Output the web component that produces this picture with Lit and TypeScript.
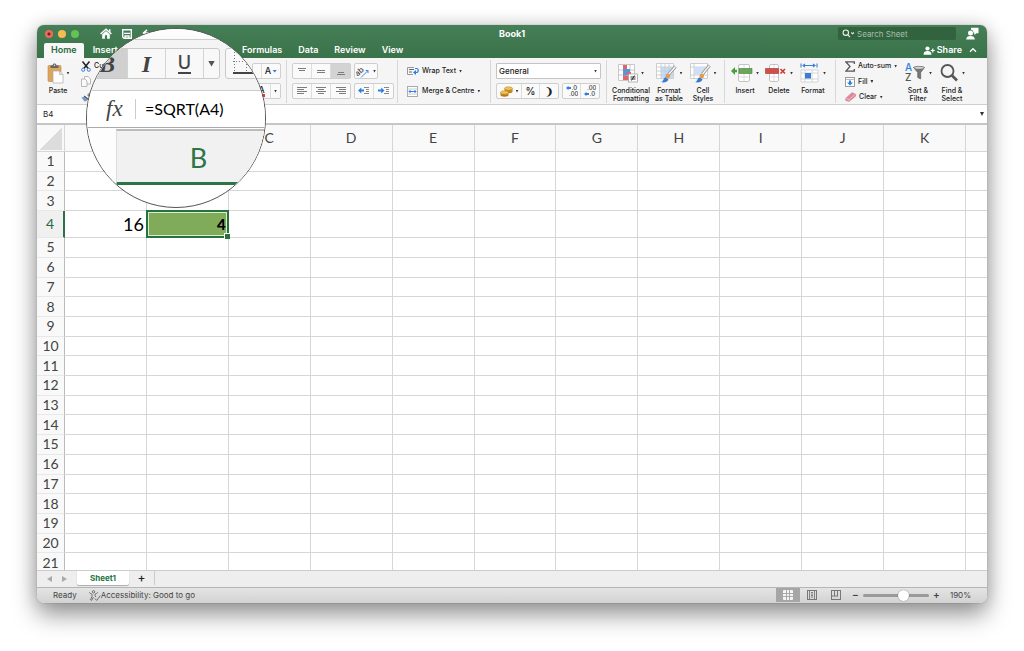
import { LitElement, html, css, svg, nothing, type TemplateResult } from "lit";
import { customElement } from "lit/decorators.js";
import { classMap } from "lit/directives/class-map.js";

const icon = (w: number, h: number, body: unknown) =>
  html`<svg class="icon" width=${w} height=${h} viewBox="0 0 ${w} ${h}" fill="none" aria-hidden="true">${body}</svg>`;

const lines = (rows: number[][]) =>
  icon(12, 10, svg`${rows.map(([x1, x2, y]) => svg`<path d="M${x1} ${y}.5H${x2}" stroke="#7c7c7c"/>`)}`);

const icons = {
  home: icon(12, 11, svg`<path d="M.6 6L6 1.2 11.400 6" stroke="#fff" stroke-width="1.4"/><path d="M9 1.2h1.5v3L9 3z" fill="#fff"/><path d="M2.2 6.200L6 2.900l3.800 3.300v4.500H7.1V7.2H4.9v3.500H2.2z" fill="#fff"/>`),
  save: icon(10, 10, svg`<path d="M.7.7h8.6v8.6H2L.7 8z" stroke="#fff" stroke-width="1.4"/><path d="M2 4.4h6M3 7h4v2.5H3z" stroke="#fff" stroke-width="1.3"/>`),
  undo: icon(12, 10, svg`<path d="M5 .8L1.6 4 5 7.2M2 4h6c2 0 3 1.500 3 4" stroke="#fff" stroke-width="1.6"/>`),
  search: icon(13, 9, svg`<circle cx="3.800" cy="3.700" r="2.700" stroke="#e8f0ea" stroke-width="1.1"/><path d="M5.800 5.800L8 8.200M9.300 3.500l1.300 1.300 1.300-1.300" stroke="#e8f0ea" stroke-width="1.1"/>`),
  feedback: icon(13, 13, svg`<circle cx="4.500" cy="6" r="2.500" fill="#fff"/><path d="M.2 12.500c0-2.500 1.600-3.500 4.300-3.500s4.300 1 4.300 3.500z" fill="#fff"/><path d="M5 .8h7.500v5.400H10.500L8.300 8V5.800H7.500C7.600 4.200 6.500 3 5 2.800z" fill="#fff"/>`),
  share: icon(12, 9, svg`<circle cx="4.500" cy="2.500" r="2.100" fill="#fff"/><path d="M.5 8.700C.5 6 2.300 5 4.500 5S8.500 6 8.500 8.700z" fill="#fff"/><path d="M9.800 2.500v4M7.800 4.500h4" stroke="#fff" stroke-width="1.2"/>`),
  collapse: icon(8, 6, svg`<path d="M1 4.700L4 1.700l3 3" stroke="#fff" stroke-width="1.300"/>`),
  paste: icon(17, 21, svg`<rect x="1" y="2.500" width="13" height="16" rx="1" fill="#dca55c" stroke="#c28a3c" stroke-width=".6"/><path d="M3.500 5V2.500h2C5.700 1 6.500.5 7.500.5s1.800.5 2 2h2V5z" fill="#666"/><circle cx="7.500" cy="2.200" r=".7" fill="#eee"/><path d="M6 8h6.500L16 11.500V20H6z" fill="#fff" stroke="#aaa" stroke-width=".7"/><path d="M12.500 8v3.500H16" fill="#ddd" stroke="#aaa" stroke-width=".6"/>`),
  cut: icon(10, 11, svg`<path d="M1.500.5l5.700 7M8.500.5l-5.700 7" stroke="#222" stroke-width="1.500"/><circle cx="2.200" cy="8.700" r="1.600" stroke="#3c7fd9"/><circle cx="7.800" cy="8.700" r="1.600" stroke="#3c7fd9"/>`),
  copy: icon(10, 11, svg`<path d="M3.500.5h3.700L9.500 3v5h-6z" fill="#fafafa" stroke="#aaa" stroke-width=".8"/><path d="M.5 3h3.500L6 5v5.500H.5z" fill="#fafafa" stroke="#aaa" stroke-width=".8"/>`),
  painter: icon(11, 10, svg`<path d="M6 3l3-2.700 1.700 1.800L8 5z" fill="#888"/><path d="M3.500 3.500L7.800 7 7 8 2.500 5z" fill="#555"/><path d="M.3 5.500L3 5l3.800 3-3 1.800z" fill="#6f9bcb"/>`),
  orient: icon(14, 13, svg`<text x="0" y="10" font-size="8" fill="#444" transform="rotate(-42 3 9)">ab</text><path d="M5 12.500L12 5.500M12 5.500v2.500M12 5.500H9.700" stroke="#3c86dd"/>`),
  outdent: icon(12, 10, svg`<path d="M6 1.500h5M8 3.500h3M8 5.500h3M6 7.500h5" stroke="#888"/><path d="M0 4.500l3.300-3v2H6v2H3.300v2z" fill="#2f7fe0"/>`),
  indent: icon(12, 10, svg`<path d="M6 1.500h5M8 3.500h3M8 5.500h3M6 7.500h5" stroke="#888"/><path d="M6.500 4.500l-3.300-3v2H0v2h3.200v2z" fill="#2f7fe0"/>`),
  wrap: icon(12, 10, svg`<path d="M7 1.500H.5v7H6" stroke="#999"/><path d="M2 3.500h5M2 6h3" stroke="#666"/><path d="M8 2.500h1.500c2.300 0 2.300 4 0 4H8" stroke="#2f7fe0" stroke-width="1.200"/><path d="M9 4v5L6 6.500z" fill="#2f7fe0"/>`),
  merge: icon(12, 11, svg`<rect x=".5" y=".5" width="10" height="10" fill="#fff" stroke="#aaa"/><path d="M.5 3h10M.5 8h10" stroke="#ccc"/><path d="M2 5.500h7M3.500 4L2 5.500 3.500 7M7.500 4L9 5.500 7.500 7" stroke="#2f7fe0"/>`),
  coins: icon(13, 11, svg`<ellipse cx="8.500" cy="5.500" rx="4" ry="1.700" fill="#b67a14"/><path d="M4.500 2.500h8v3h-8z" fill="#c98f25"/><ellipse cx="8.500" cy="2.500" rx="4" ry="1.700" fill="#f0c45c" stroke="#b67a14" stroke-width=".5"/><ellipse cx="4.500" cy="9" rx="4" ry="1.700" fill="#b67a14"/><path d="M.5 6.500h8V9h-8z" fill="#c98f25"/><ellipse cx="4.500" cy="6.500" rx="4" ry="1.700" fill="#f0c45c" stroke="#b67a14" stroke-width=".5"/>`),
  moreDec: icon(12, 12, svg`<path d="M0 3l2.500-2.200V2H5v2H2.500v1.200z" fill="#2f7fe0"/><text x="5.500" y="5" font-size="6" fill="#333">.0</text><text x="3" y="11" font-size="6" fill="#333">.00</text>`),
  lessDec: icon(12, 12, svg`<path d="M0 9l2.500-2.200V8H5v2H2.500v1.200z" fill="#2f7fe0"/><text x="3" y="5" font-size="6" fill="#333">.00</text><text x="5.500" y="11" font-size="6" fill="#333">.0</text>`),
  conditional: icon(20, 19, svg`<path d="M.5.5h16v16H.5zM6 .5v16M12 .5v16M.5 6h16M.5 11h16" fill="#fff" stroke="#bbb" stroke-width=".8"/><path d="M5 1h4v4H5zM5 11.500h7v4.500H5z" fill="#e06666"/><path d="M5 5h7v3H5zM5 8h4v3.500H5z" fill="#5b93dd"/><path d="M9 8h4v3H9z" fill="#e06666"/><rect x="10.500" y="10" width="9" height="8" fill="#fff" stroke="#999" stroke-width=".7"/><path d="M12.500 13h5M12.500 15h5M16.500 11.500l-3 5" stroke="#222" stroke-width=".9"/>`),
  table: icon(21, 20, svg`<path d="M.5.5h17v15H.5zM5 .5v15M9 .5v15M13 .5v15M.5 4h17M.5 8h17M.5 12h17" fill="#fff" stroke="#c4c4c4" stroke-width=".8"/><path d="M5 4h12v11H5z" fill="#b9d3f0" opacity=".8"/><path d="M19.500 3.500l-7 8" stroke="#888" stroke-width="3"/><path d="M19.500 3.500l-7 8" stroke="#f5f5f5" stroke-width="1.600"/><circle cx="11.800" cy="13" r="2.300" fill="#e49a49"/><path d="M5 19c2.500 0 2-3.500 4.500-4.700l3 2.200C11.500 19 8 20 5 19z" fill="#3a7bd0"/>`),
  styles: icon(21, 20, svg`<path d="M.5.5h17v15H.5zM4 .5v15M.5 4h17M.5 12h17" fill="#fff" stroke="#c4c4c4" stroke-width=".8"/><path d="M4 4h11v8H4z" fill="#cfe0f5"/><path d="M19.500 2.500l-7 8.500" stroke="#888" stroke-width="3"/><path d="M19.500 2.500l-7 8.500" stroke="#f5f5f5" stroke-width="1.600"/><circle cx="11.800" cy="13" r="2.300" fill="#e49a49"/><path d="M5 19c2.500 0 2-3.500 4.500-4.700l3 2.200C11.500 19 8 20 5 19z" fill="#3a7bd0"/>`),
  insert: icon(22, 18, svg`<rect x="7.500" y=".5" width="11" height="17" rx="1.500" fill="#fff" stroke="#c4c4c4"/><path d="M13 1v16M8 5h10M8 13h10" stroke="#ddd"/><path d="M8 4.500h13v5H8z" fill="#6aa65e" stroke="#3e8436" stroke-width=".6"/><path d="M0 7l4-4v2.700h2v2.600H4V11z" fill="#4f9a43"/>`),
  remove: icon(22, 18, svg`<rect x="4.500" y=".5" width="9" height="17" rx="1.500" fill="#fff" stroke="#c4c4c4"/><path d="M9 1v16M5 5h8M5 13h8" stroke="#ddd"/><path d="M.5 4.500h13v5H.5z" fill="#cf4f49" stroke="#a8302c" stroke-width=".6"/><path d="M15.500 5l4.500 4.500M20 5l-4.500 4.500" stroke="#c93a34" stroke-width="1.600"/>`),
  format: icon(20, 20, svg`<path d="M1 .5v4M17 .5v4M3 2.500h12M5 .8L3 2.500l2 1.700M13 .8l2 1.700-2 1.700" stroke="#3a7fd5" stroke-width="1.100"/><path d="M1 7h17v12H1zM5 7v12M12 7v12M1 10h17M1 16h17" fill="#fff" stroke="#ccc" stroke-width=".8"/><path d="M5 10h6v5.500H5z" fill="#3a7fd5"/>`),
  sigma: icon(10, 11, svg`<path d="M9.300 3V.8H.8L5 5.400.8 10.200h8.500V8" stroke="#555" stroke-width="1.300"/>`),
  fill: icon(10, 10, svg`<rect x=".5" y=".5" width="9" height="9" fill="#fff" stroke="#999"/><path d="M.5 2.500h9" stroke="#bbb"/><path d="M4 3.500h2v2h2L5 8.500l-3-3h2z" fill="#2f7fe0"/>`),
  eraser: icon(11, 10, svg`<path d="M.7 6.500L7 .7l3.500 1.500v2L4 9.500.7 8.300z" fill="#e08a9b" stroke="#b85c70" stroke-width=".5"/><path d="M.7 6.500L4 7.700l6.500-5.500M4 7.700v1.800" stroke="#f6d0d8" stroke-width=".7"/>`),
  sort: icon(22, 20, svg`<text x="1" y="8" font-size="10" fill="#2f7fe0">A</text><text x="1" y="18" font-size="10" fill="#555">Z</text><path d="M9.500 4.500c0-1.500 11-1.500 11 0L16.700 9.500v6.500l-3-1.500v-5z" fill="#777" stroke="#555" stroke-width=".6"/><ellipse cx="15" cy="4.700" rx="4.600" ry="1" fill="#d5d5d5"/>`),
  find: icon(20, 20, svg`<circle cx="8.500" cy="8" r="6" stroke="#555" stroke-width="1.800"/><path d="M13 12.500l5 5" stroke="#555" stroke-width="2.600"/>`),
  access: icon(12, 11, svg`<circle cx="4.500" cy="1.800" r="1.200" stroke="#555" stroke-width=".8"/><path d="M.6 2.200c-.3.700 0 1 2.400 2v2.300L1.500 9.800c.5.800 1.100.6 1.400.2L4.400 7.200M8.400 2.200c.3.700 0 1-2.400 2v1.600l1 1.200M5.800 8.500l1.900 1.900 3.700-4.900" stroke="#555" stroke-width=".8"/>`),
  normal: icon(10, 10, svg`<rect width="10" height="10" rx="1" fill="#f4f4f4"/><path d="M3.500 0v10M6.500 0v10M0 3.500h10M0 6.500h10" stroke="#999" stroke-width=".8"/>`),
  page: icon(10, 10, svg`<rect x=".5" y=".5" width="9" height="9" stroke="#777"/><path d="M2.500 1v8M7.500 1v8M4 2.500h2M4 4h2M4 5.500h2M4 7h2" stroke="#777" stroke-width=".9"/>`),
  breaks: icon(10, 10, svg`<rect x=".5" y=".5" width="9" height="9" stroke="#777"/><path d="M3.500 1v5M6.500 1v5M1 6h6" stroke="#777"/>`),
  border: icon(30, 26, svg`<path d="M1.500 0v22M13.500 0v22M0 12.500h28" stroke="#777" stroke-dasharray="1 2"/><path d="M0 24h30" stroke="#444" stroke-width="2"/>`),
};

const caret = html`<span class="caret"></span>`;

const big = (label: TemplateResult, pic: unknown, cls = "") =>
  html`<button class="big ${cls}"><span class="pic">${pic}${caret}</span><span>${label}</span></button>`;

@customElement("app-root")
export class AppRoot extends LitElement {
  static styles = css`
    :host { display: flex; box-sizing: border-box; height: 100vh; padding: 25px 37px 48px; background: #fff; color: #222; font: 500 7px/8px Inter, "Open Sans", sans-serif; }
    * { box-sizing: border-box; }
    button, input, select { font: inherit; color: inherit; background: none; border: 0; padding: 0; margin: 0; outline: 0; min-width: 0; }
    button { display: flex; align-items: center; justify-content: center; white-space: nowrap; }
    a { color: inherit; text-decoration: none; }
    .icon { display: block; flex: none; }
    .window { position: relative; flex: 1; min-width: 0; display: flex; flex-direction: column; border-radius: 7px; background: #fff; box-shadow: 0 0 1px rgba(0,0,0,.5), 0 12px 24px rgba(0,0,0,.4), 0 0 18px rgba(0,0,0,.14); }
    .caret { flex: none; width: 3px; height: 3px; background: #333; clip-path: polygon(0 0, 100% 0, 50% 100%); }

    .top { height: 33px; flex: none; color: #fff; background: linear-gradient(#467f57, #3a7249); border-radius: 7px 7px 0 0; }
    .title { height: 17px; display: grid; grid-template-columns: 1fr auto 1fr; align-items: center; }
    .title h1 { margin: 0; font-size: 9px; line-height: 10px; font-weight: 700; }
    .left { display: flex; align-items: center; }
    .lights { display: flex; gap: 5px; padding: 0 21px 0 8px; }
    .lights i { width: 8px; height: 8px; border-radius: 50%; background: radial-gradient(circle, #7c1f17 1px, #ee6a5f 2px); }
    .lights i:nth-child(2) { background: #f5bd4f; }
    .lights i:nth-child(3) { background: #61c454; }
    .quick { display: flex; gap: 10px; }
    .right { display: flex; justify-content: flex-end; align-items: center; gap: 10px; padding-right: 8px; }
    .search { display: flex; align-items: center; gap: 2px; width: 118px; height: 13px; padding-left: 4px; border-radius: 2px; background: #32633f; font-size: 8px; font-weight: 400; }
    .search input { flex: 1; }
    .search input::placeholder { color: #a5bfac; opacity: 1; }
    .menu { height: 16px; display: flex; align-items: center; padding: 0 10px 0 7px; font-size: 9px; line-height: 16px; font-weight: 600; }
    .tabs { display: flex; flex: 1; gap: 2px; }
    .tabs a { padding: 0 7px; }
    .tabs a.on { margin-top: 1px; height: 15px; line-height: 14px; background: #f7f7f7; color: #2c6a41; border-radius: 2px 2px 0 0; }
    .share { gap: 2px; margin-right: 7px; }

    .ribbon { display: flex; height: 47px; flex: none; background: #f5f5f5; border-bottom: 1px solid #cfcfcf; }
    .group { display: flex; flex: none; margin: 2px 0 1px; border-right: 1px solid #d8d8d8; }
    .group.last { border: 0; }
    .big { flex-direction: column; justify-content: flex-start; gap: 1px; text-align: center; width: 34px; flex: none; }
    .big .pic { display: flex; align-items: center; height: 26px; gap: 3px; }
    .big.wide { width: 42px; }
    .g-home { width: 250px; padding-left: 4px; justify-content: space-between; }
    .clip { display: flex; }
    .mini { display: flex; flex-direction: column; justify-content: space-between; padding-left: 6px; }
    .mini button { justify-content: flex-start; gap: 3px; height: 12px; }
    .rows { display: flex; flex-direction: column; gap: 4px; padding: 3px 5px; }
    .row { display: flex; gap: 3px; }
    .box { display: flex; height: 16px; border: 1px solid #cfcfcf; border-radius: 2px; background: #fafafa; }
    .box button { width: 19px; gap: 3px; border-right: 1px solid #ddd; }
    .box button:last-child { border-right: 0; }
    .box button.on { background: #d3d3d3; }
    .box button.w { width: 22px; }
    .box button.n { width: 9px; }
    .box button.a { width: 18px; gap: 1px; font-size: 9px; }
    .box.sign button { width: 18px; font-size: 10px; }
    .box.sign button.coin { width: 25px; }
    .box.dec button { width: 18px; }
    .blue { width: 5px; background: #2f7fe0; }
    .red { border-bottom: 3px solid #e33; font-size: 9px; line-height: 9px; }
    .g-align { width: 111px; }
    .g-wrap { width: 93px; }
    .g-wrap .rows { padding-left: 9px; }
    .g-wrap button { height: 16px; gap: 3px; justify-content: flex-start; }
    .g-num { width: 116px; }
    .g-num .rows { flex: 1; }
    .select { display: grid; align-items: center; justify-items: end; height: 16px; padding-right: 3px; border: 1px solid #c4c4c4; border-radius: 1px; background: #fff; font-size: 8px; }
    .select select { grid-area: 1/1; justify-self: stretch; appearance: none; padding-left: 2px; line-height: 12px; }
    .select .caret { grid-area: 1/1; pointer-events: none; }
    .g-style { width: 118px; padding-left: 3px; }
    .g-cells { width: 111px; padding-left: 3px; }
    .g-edit .mini { width: 65px; padding-left: 9px; }

    .fbar { display: flex; align-items: center; height: 20px; flex: none; padding: 0 3px 0 6px; border-bottom: 2px solid #c6c6c6; background: #fff; }
    .fbar input { width: 44px; font-size: 8px; font-weight: 400; }
    .fbar .content { flex: 1; }
    .fbar .caret { width: 4px; height: 4px; }

    .sheet { flex: 1; min-height: 0; overflow: hidden; }
    .grid { display: grid; height: calc(100% + 3px); grid-template-columns: 28px repeat(11, 1fr) 21px; grid-template-rows: 27px repeat(3, 1fr) 27px repeat(17, 1fr); font: 400 14px/16px Lato, "Open Sans", sans-serif; color: #444; }
    .grid thead, .grid tbody, .grid tr { display: contents; }
    .grid th, .grid td { display: flex; align-items: center; justify-content: center; min-width: 0; min-height: 0; padding: 0; border-right: 1px solid #d6d6d6; border-bottom: 1px solid #d6d6d6; font-weight: 400; }
    .grid th { background: #f9f9f9; }
    .grid tbody th { border-right-color: #bbb; border-bottom-color: #e8e8e8; }
    .grid tbody th.cur { color: #2c6a41; background: #f0f0f0; border-right: 2px solid #2a7344; }
    .grid td:last-child, .grid th:last-child { border-right: 0; }
    .grid td.val { justify-content: flex-end; padding-right: 2px; font-size: 18px; color: #000; }
    .grid td.sel { position: relative; justify-content: flex-end; padding-right: 1px; margin: -1px 0 0 -1px; border: 2px solid #27713f; box-shadow: inset 0 0 0 1px #dcebcf; background: #80ab58; color: #000; font-size: 15px; font-weight: 900; }
    .grid td.sel::after { content: ""; position: absolute; right: -3px; bottom: -3px; width: 5px; height: 5px; border: 1px solid #fff; border-width: 1px 0 0 1px; background: #27713f; }
    .corner { width: 23px; height: 22px; align-self: flex-end; margin-bottom: 1px; background: linear-gradient(135deg, transparent 50%, #dcdcdc 50%); }

    .sheets { display: flex; align-items: flex-start; height: 17px; flex: none; background: #eee; border-top: 1px solid #ccc; font-size: 8px; line-height: 14px; }
    .nav { display: flex; gap: 10px; padding: 5px 10px 0; }
    .tri { width: 5px; height: 6px; background: #aaa; clip-path: polygon(0 0, 100% 50%, 0 100%); }
    .tri.back { clip-path: polygon(100% 0, 0 50%, 100% 100%); }
    .sheets .tab { width: 52px; height: 14px; background: #fff; color: #23743f; font-weight: 700; box-shadow: 0 1px 1px #aaa; border-radius: 0 0 2px 2px; }
    .sheets .add { width: 26px; height: 14px; font-size: 12px; border-right: 1px solid #ccc; }

    .status { display: flex; align-items: center; height: 16px; flex: none; padding: 0 16px 1px; border-top: 1px solid #b5b5b5; border-radius: 0 0 7px 7px; background: linear-gradient(#e4e4e4, #d2d2d2); color: #444; font-size: 8px; line-height: 10px; font-weight: 400; }
    .status .acc { margin-left: 12px; margin-right: auto; }
    .views { display: flex; }
    .views button { width: 24px; height: 14px; }
    .views .on { background: #a6a6a6; }
    .zoom { display: flex; align-items: center; gap: 4px; margin-left: 4px; }
    .zoom button { font-size: 10px; width: 7px; padding-bottom: 2px; font-weight: 600; }
    .zoom input { appearance: none; width: 66px; height: 3px; border-radius: 2px; background: #999; }
    .zoom input::-webkit-slider-thumb { appearance: none; width: 11px; height: 11px; border-radius: 50%; background: #fff; box-shadow: 0 0 1px #555; }
    .zoom output { margin-left: 6px; }

    .lens { position: absolute; left: 49px; top: 3px; width: 180px; height: 180px; border: 1px solid #555; border-radius: 50%; overflow: hidden; background: #fff; color: #444; }
    .l-top { height: 10px; background: linear-gradient(#fff, #fafafa); }
    .l-tools { display: flex; gap: 5px; height: 52px; padding-top: 8px; border-top: 1px solid #ccc; border-bottom: 1px solid #ccc; background: #f4f4f4; }
    .l-box { display: flex; flex: none; height: 31px; border: 1px solid #c9c9c9; border-radius: 3px; background: #f8f8f8; }
    .l-box button { width: 38px; border-right: 1px solid #d4d4d4; font: 700 24px/28px "Liberation Serif", serif; }
    .l-box .b { width: 40px; justify-content: flex-end; padding-right: 12px; background: #d0d0d0; font-style: italic; }
    .l-box .i { font-style: italic; }
    .l-box .u { font: 500 18px/17px Inter, sans-serif; }
    .l-box .u span { border-bottom: 2px solid #444; padding-bottom: 1px; }
    .l-box .d { width: 15px; border: 0; }
    .l-box .d span { width: 7px; height: 6px; background: #555; clip-path: polygon(0 0, 100% 0, 50% 100%); }
    .l-box.two { width: 60px; padding-left: 7px; }
    .l-fx { display: flex; align-items: center; height: 36px; padding-left: 19px; background: #fff; }
    .l-fx i { width: 30px; height: 20px; font: italic 400 23px/19px "Liberation Serif", serif; border-right: 1px solid #ccc; }
    .l-fx input { width: 100px; margin-left: 9px; font: 400 16px/22px Lato, sans-serif; color: #000; }
    .l-head { display: flex; height: 58px; border-top: 1px solid #aaa; background: #fdfdfd; }
    .l-head div { flex: none; margin: 1px 0 0 29px; width: 164px; border-top: 2px solid #bbb; border-bottom: 3px solid #2c7347; border-left: 1px solid #ddd; background: #f1f1f1; color: #2c7347; font: 400 27px/54px Lato, sans-serif; text-align: center; }
  `;

  private cell(row: number, col: string) {
    const value = row === 4 ? (col === "A" ? "16" : col === "B" ? "4" : nothing) : nothing;
    return html`<td class=${classMap({ val: row === 4 && col === "A", sel: row === 4 && col === "B" })}>${value}</td>`;
  }

  render() {
    const cols = [..."ABCDEFGHIJK", ""];
    return html`
      <main class="window">
        <header class="top">
          <div class="title">
            <div class="left">
              <div class="lights"><i></i><i></i><i></i></div>
              <div class="quick"><button aria-label="Home">${icons.home}</button><button aria-label="Save">${icons.save}</button><button aria-label="Undo">${icons.undo}</button></div>
            </div>
            <h1>Book1</h1>
            <div class="right">
              <label class="search">${icons.search}<input placeholder="Search Sheet" aria-label="Search Sheet" /></label>
              <button aria-label="Feedback">${icons.feedback}</button>
            </div>
          </div>
          <div class="menu">
            <nav class="tabs">
              ${["Home", "Insert", "Draw", "Page Layout", "Formulas", "Data", "Review", "View"].map((t, i) => html`<a href="#" class=${classMap({ on: i === 0 })}>${t}</a>`)}
            </nav>
            <button class="share">${icons.share}Share</button>
            <button aria-label="Collapse ribbon">${icons.collapse}</button>
          </div>
        </header>

        <section class="ribbon">
          <div class="group g-home">
            <div class="clip">
              ${big(html`Paste`, icons.paste)}
              <div class="mini"><button>${icons.cut}Cut</button><button aria-label="Copy">${icons.copy}</button><button aria-label="Format painter">${icons.painter}</button></div>
            </div>
            <div class="rows">
              <div class="box"><button class="n" aria-label="Grow font"></button><button class="a" aria-label="Shrink font">A<span class="caret blue"></span></button></div>
              <div class="box"><button class="a" aria-label="Font colour"><span class="red">A</span></button><button class="n" aria-label="Colours">${caret}</button></div>
            </div>
          </div>
          <div class="group g-align"><div class="rows">
            <div class="row">
              <div class="box"><button aria-label="Top">${lines([[2, 10, 2], [3, 9, 4]])}</button><button aria-label="Middle">${lines([[2, 10, 4], [2, 10, 6]])}</button><button class="on" aria-label="Bottom">${lines([[3, 9, 6], [2, 10, 8]])}</button></div>
              <div class="box"><button class="w" aria-label="Orientation">${icons.orient}${caret}</button></div>
            </div>
            <div class="row">
              <div class="box"><button aria-label="Left">${lines([[1, 11, 1], [1, 8, 3], [1, 11, 5], [1, 8, 7]])}</button><button aria-label="Centre">${lines([[1, 11, 1], [3, 9, 3], [1, 11, 5], [3, 9, 7]])}</button><button aria-label="Right">${lines([[1, 11, 1], [4, 11, 3], [1, 11, 5], [4, 11, 7]])}</button></div>
              <div class="box"><button aria-label="Decrease indent">${icons.outdent}</button><button aria-label="Increase indent">${icons.indent}</button></div>
            </div>
          </div></div>
          <div class="group g-wrap"><div class="rows">
            <button>${icons.wrap}Wrap Text ${caret}</button>
            <button>${icons.merge}Merge &amp; Centre ${caret}</button>
          </div></div>
          <div class="group g-num"><div class="rows">
            <div class="select"><select aria-label="Number format"><option>General</option></select>${caret}</div>
            <div class="row">
              <div class="box sign"><button class="coin" aria-label="Currency">${icons.coins}${caret}</button><button>%</button><button><b>❩</b></button></div>
              <div class="box dec"><button aria-label="Increase decimals">${icons.moreDec}</button><button aria-label="Decrease decimals">${icons.lessDec}</button></div>
            </div>
          </div></div>
          <div class="group g-style">
            ${big(html`Conditional<br />Formatting`, icons.conditional, "wide")}
            ${big(html`Format<br />as Table`, icons.table)}
            ${big(html`Cell<br />Styles`, icons.styles)}
          </div>
          <div class="group g-cells">
            ${big(html`Insert`, icons.insert)}${big(html`Delete`, icons.remove)}${big(html`Format`, icons.format)}
          </div>
          <div class="group last g-edit">
            <div class="mini"><button>${icons.sigma}Auto-sum ${caret}</button><button>${icons.fill}Fill ${caret}</button><button>${icons.eraser}Clear ${caret}</button></div>
            ${big(html`Sort &amp;<br />Filter`, icons.sort)}${big(html`Find &amp;<br />Select`, icons.find)}
          </div>
        </section>

        <div class="fbar">
          <input aria-label="Name box" value="B4" /><span class="content"></span>${caret}
        </div>

        <div class="sheet">
          <table class="grid">
            <thead><tr><th><span class="corner"></span></th>${cols.map((c) => html`<th>${c}</th>`)}</tr></thead>
            <tbody>
              ${Array.from({ length: 21 }, (_, i) => html`<tr><th class=${classMap({ cur: i === 3 })}>${i + 1}</th>${cols.map((c) => this.cell(i + 1, c))}</tr>`)}
            </tbody>
          </table>
        </div>

        <div class="sheets">
          <div class="nav"><i class="tri back"></i><i class="tri"></i></div>
          <button class="tab">Sheet1</button>
          <button class="add" aria-label="Add sheet">+</button>
        </div>
        <footer class="status">
          <span>Ready</span>
          <button class="acc">${icons.access}Accessibility: Good to go</button>
          <div class="views"><button class="on" aria-label="Normal">${icons.normal}</button><button aria-label="Page layout">${icons.page}</button><button aria-label="Page breaks">${icons.breaks}</button></div>
          <div class="zoom"><button aria-label="Zoom out">−</button><input type="range" min="0" max="100" value="64" aria-label="Zoom" /><button aria-label="Zoom in">+</button><output>190%</output></div>
        </footer>

        <aside class="lens">
          <div class="l-top"></div>
          <div class="l-tools">
            <div class="l-box"><button class="b">B</button><button class="i">I</button><button class="u"><span>U</span></button><button class="d" aria-label="Underline styles"><span></span></button></div>
            <div class="l-box two">${icons.border}</div>
          </div>
          <div class="l-fx"><i>fx</i><input aria-label="Formula" value="=SQRT(A4)" /></div>
          <div class="l-head"><div>B</div></div>
        </aside>
      </main>
    `;
  }
}
